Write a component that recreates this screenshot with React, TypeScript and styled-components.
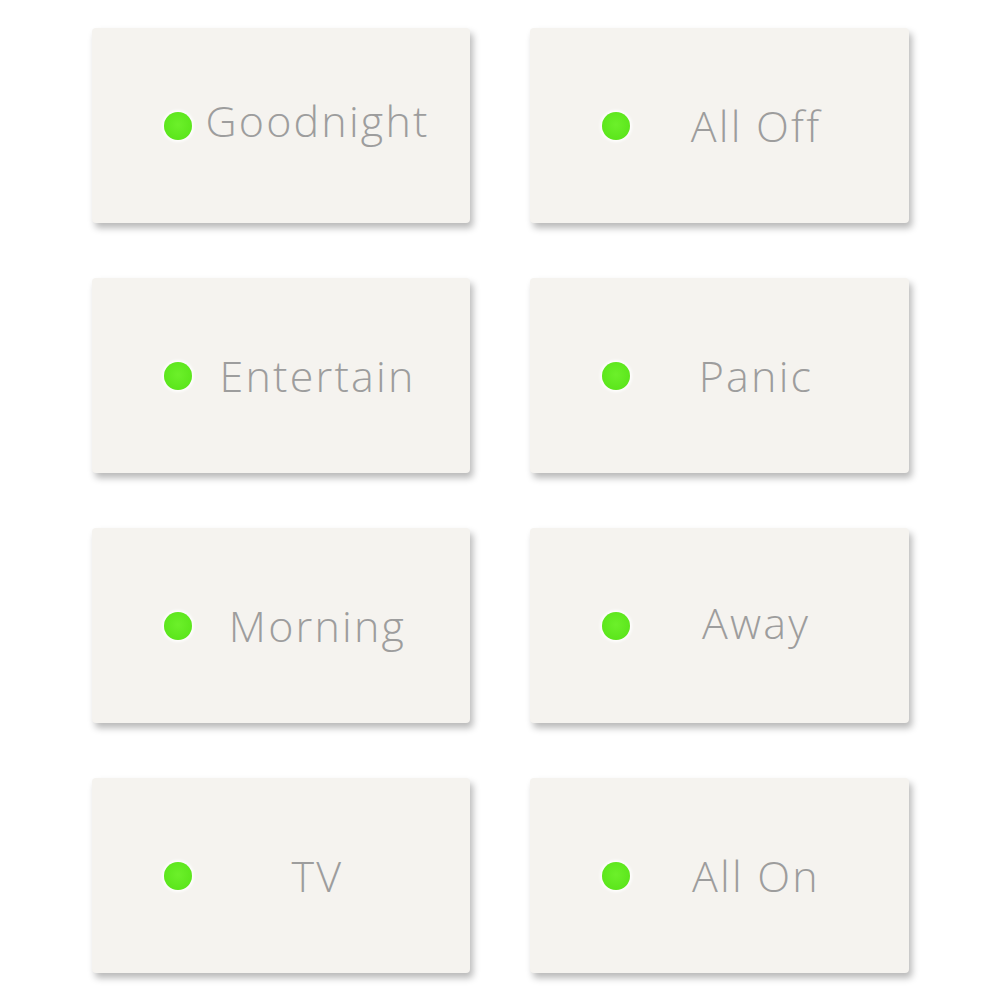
import React from 'react'
import styled, { createGlobalStyle } from 'styled-components'

const GlobalStyle = createGlobalStyle`
  html, body {
    margin: 0;
    padding: 0;
    background: #ffffff;
  }
  body {
    font-family: 'Open Sans', Lato, sans-serif;
  }
`

const SceneGrid = styled.div`
  display: grid;
  grid-template-columns: 378px 379px;
  grid-auto-rows: 195px;
  column-gap: 60px;
  row-gap: 55px;
  padding: 28px 0 27px 92px;
`

const SceneCard = styled.button`
  display: flex;
  align-items: center;
  padding: 0 27px 0 72px;
  border: none;
  border-radius: 4px;
  background: #f5f3ef;
  box-shadow: 3px 5px 7px rgba(0, 0, 0, 0.28);
  cursor: pointer;
  font: inherit;
`

const StatusDot = styled.span`
  flex: none;
  width: 28px;
  height: 28px;
  border-radius: 50%;
  background: radial-gradient(circle at 50% 45%, #6cf02a 0%, #5ce61c 70%, #55d81a 100%);
  box-shadow: 0 0 3px 2px rgba(255, 255, 255, 0.9);
`

const SceneLabel = styled.span<{ $lift?: number }>`
  flex: 1;
  text-align: center;
  font-family: 'Open Sans', Lato, sans-serif;
  font-weight: 300;
  font-size: 43px;
  letter-spacing: 2.2px;
  color: #9d9d9d;
  white-space: nowrap;
  transform: translateY(${({ $lift }) => -($lift ?? 0)}px);
`

const scenes = [
  { name: 'Goodnight', lift: 5 },
  { name: 'All Off' },
  { name: 'Entertain' },
  { name: 'Panic' },
  { name: 'Morning' },
  { name: 'Away', lift: 3 },
  { name: 'TV' },
  { name: 'All On' },
]

export default function App() {
  return (
    <>
      <GlobalStyle />
      <SceneGrid>
        {scenes.map((s) => (
          <SceneCard key={s.name}>
            <StatusDot />
            <SceneLabel $lift={s.lift}>{s.name}</SceneLabel>
          </SceneCard>
        ))}
      </SceneGrid>
    </>
  )
}
